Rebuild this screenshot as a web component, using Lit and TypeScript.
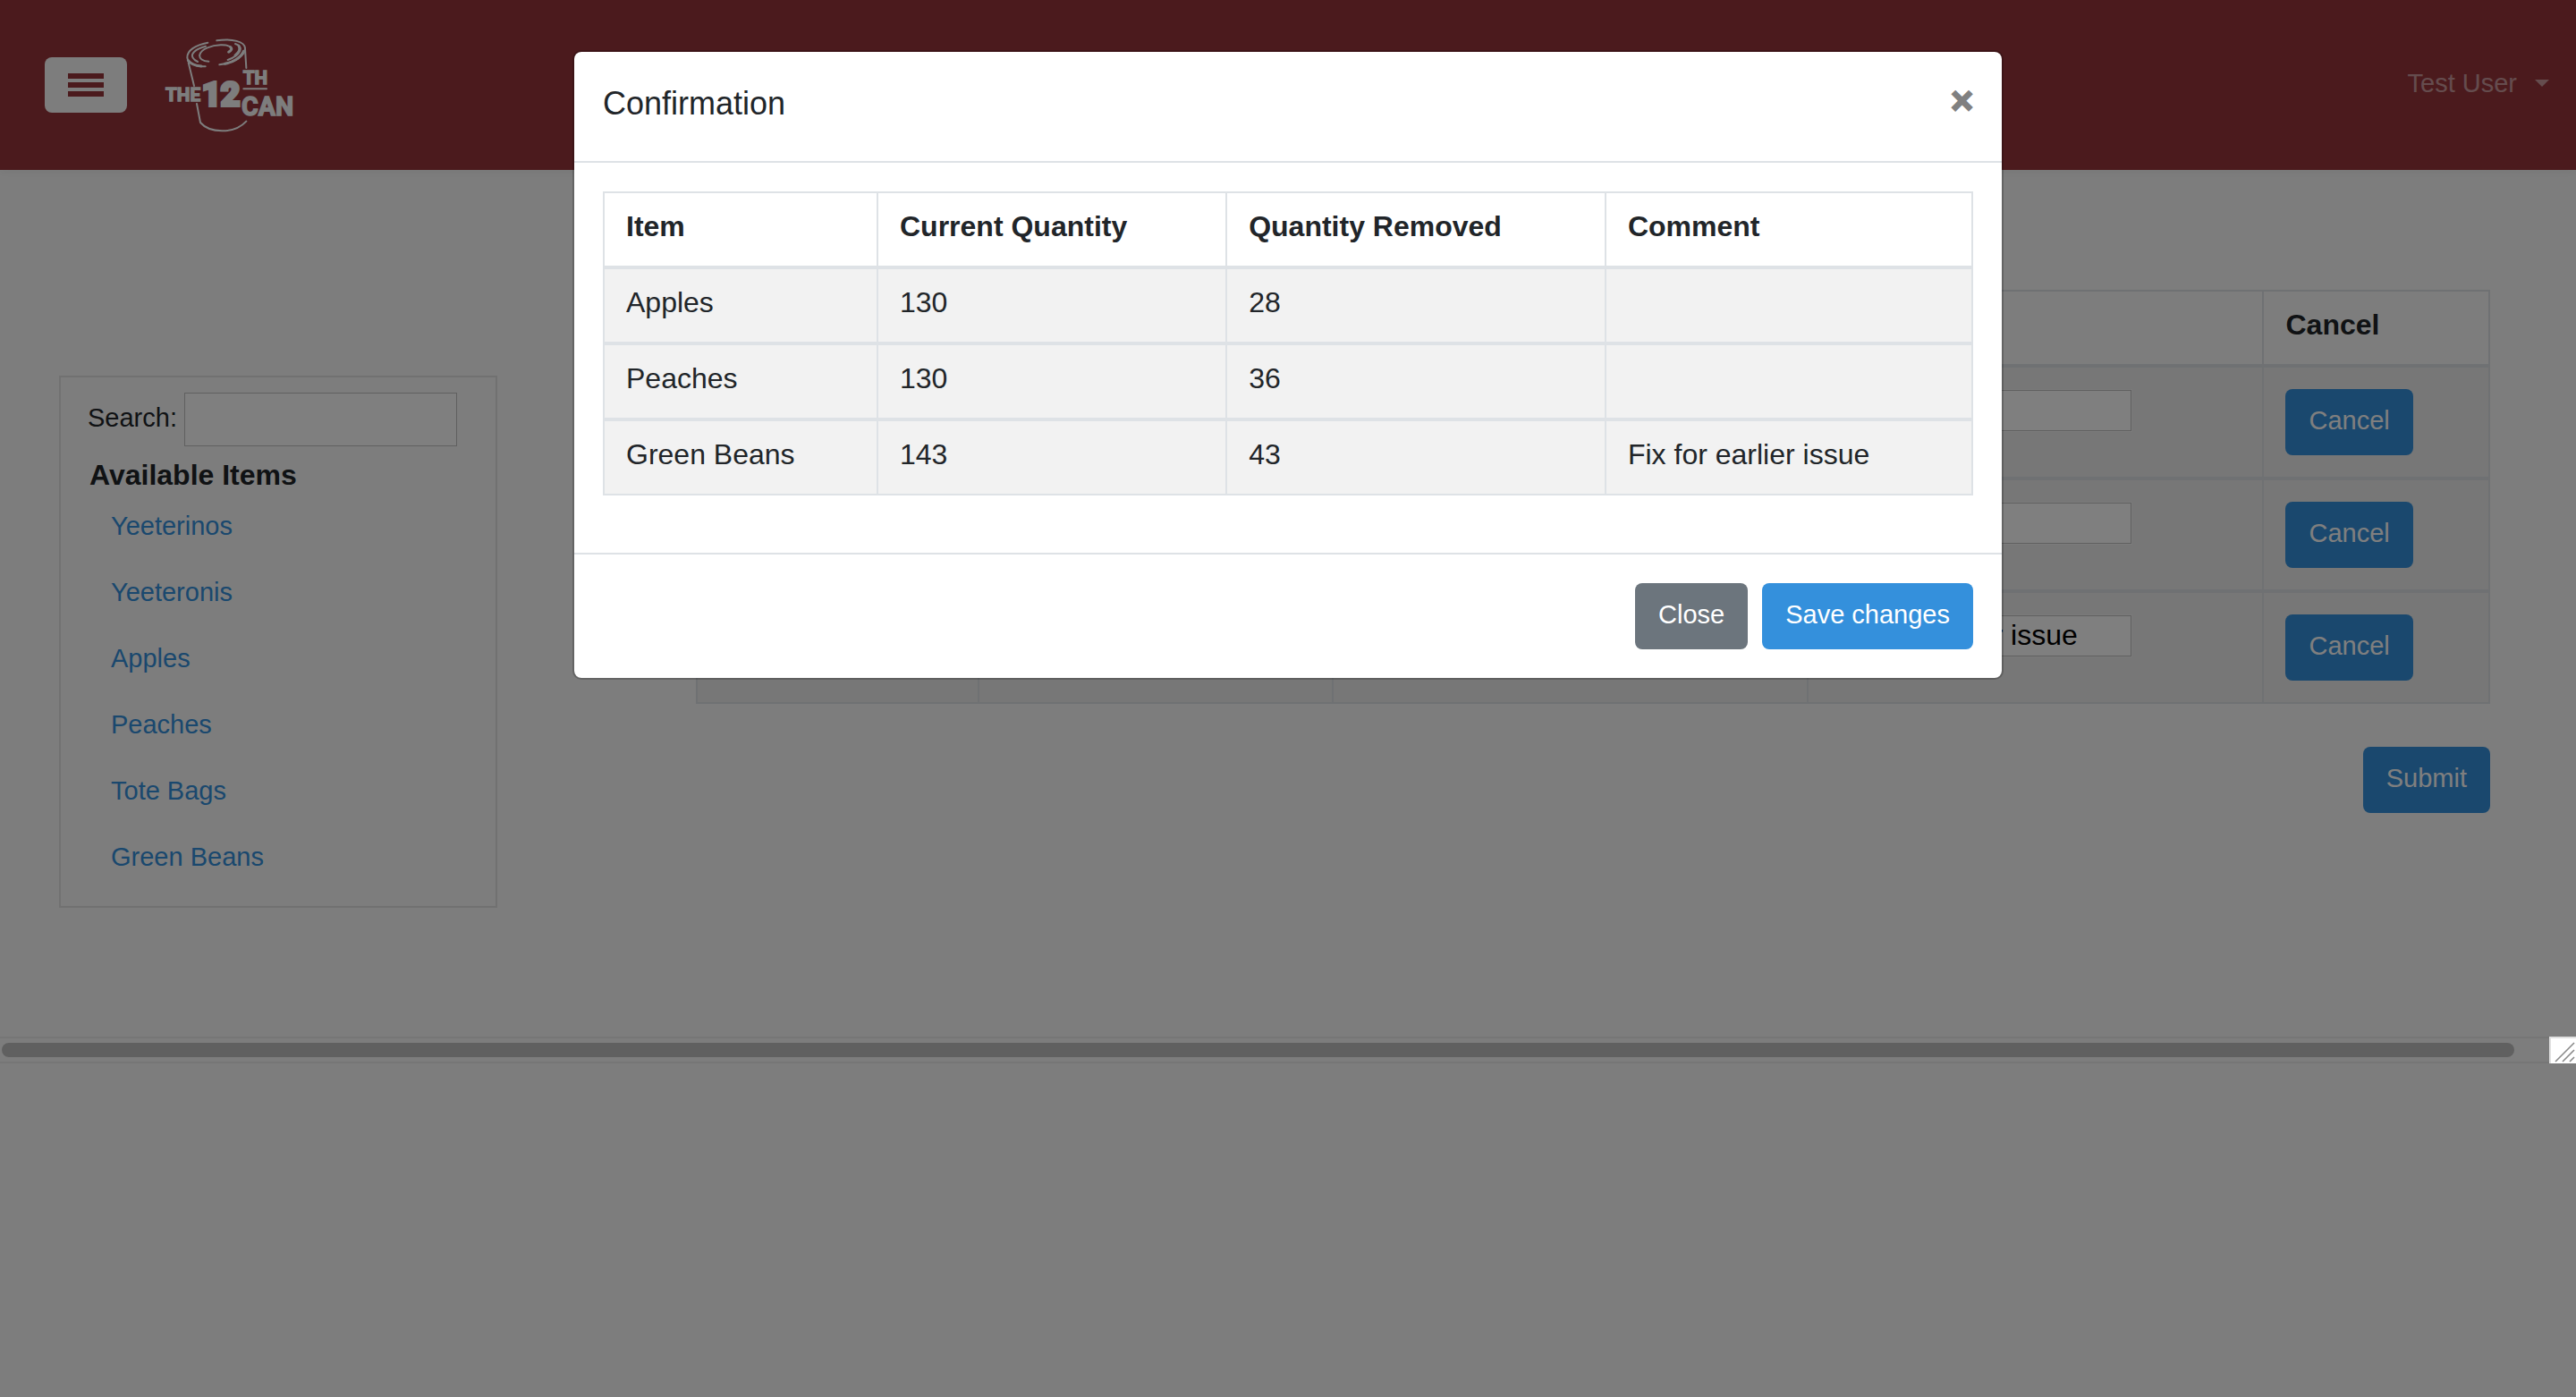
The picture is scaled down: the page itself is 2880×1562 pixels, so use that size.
import { LitElement, html, css } from "lit";
import { customElement, property } from "lit/decorators.js";

interface Removal {
  item: string;
  current: number;
  removed: number;
  comment: string;
}

const REMOVALS: Removal[] = [
  { item: "Apples", current: 130, removed: 28, comment: "" },
  { item: "Peaches", current: 130, removed: 36, comment: "" },
  { item: "Green Beans", current: 143, removed: 43, comment: "Fix for earlier issue" },
];

const AVAILABLE = ["Yeeterinos", "Yeeteronis", "Apples", "Peaches", "Tote Bags", "Green Beans"];

const shared = css`
  * {
    box-sizing: border-box;
  }
  button,
  input {
    font-family: inherit;
    margin: 0;
  }
  .btn {
    display: block;
    border: 0;
    border-radius: 8px;
    padding: 12px 26px 16px;
    font-size: 29px;
    line-height: 46px;
    color: #fff;
    background: #3490dc;
    cursor: pointer;
  }
  .btn.secondary {
    background: #6c757d;
  }
  .grid {
    width: 100%;
    table-layout: fixed;
    border-collapse: collapse;
    border: 2px solid #dee2e6;
    font-size: 32px;
    line-height: 51px;
    text-align: left;
  }
  .grid th,
  .grid td {
    border: 2px solid #dee2e6;
    padding: 12px 24px 18px;
    vertical-align: top;
  }
  .grid tbody td {
    border-top-width: 4px;
    background: rgba(0, 0, 0, 0.05);
  }
`;

@customElement("can-logo")
export class CanLogo extends LitElement {
  static styles = css`
    :host {
      display: block;
    }
    .logo {
      display: block;
      width: 146px;
      height: 106px;
      overflow: visible;
    }
    .line {
      fill: none;
      stroke: #fbfbfb;
      stroke-width: 6;
      stroke-linecap: round;
      stroke-linejoin: round;
    }
    .thick {
      stroke-width: 9;
    }
    .word {
      fill: #fbfbfb;
      stroke: #fbfbfb;
      stroke-width: 4;
      font-family: Roboto, "Liberation Sans", sans-serif;
      font-weight: 700;
    }
    .word.small {
      font-size: 62px;
    }
    .word.medium {
      font-size: 86px;
    }
    .word.large {
      font-size: 110px;
      stroke-width: 12;
    }
  `;

  render() {
    return html`
      <svg class="logo" viewBox="462 66 438 318" role="img" aria-label="The 12th Can">
        <path class="line" d="M607 83 C565 91 537 110 538 133 C540 151 565 163 599 163" />
        <path class="line thick" d="M541 143 C550 155 570 161 585 162" />
        <path class="line" d="M637 76 C690 68 730 80 732 101 C733 126 700 150 646 157" />
        <path class="line thick" d="M727 112 C718 134 690 149 665 154" />
        <path class="line" d="M600 95 C565 104 548 121 557 134 C560 140 566 144 573 147" />
        <path class="line" d="M610 146 C590 146 577 136 580 124 C584 103 622 92 650 91 C682 90 696 102 676 115" />
        <path class="line thick" d="M683 98 C689 103 687 108 678 114" />
        <path class="line" d="M699 87 C731 96 716 126 674 141" />
        <path class="line thick" d="M711 94 C717 104 711 117 699 126" />
        <path class="line" d="M732 104 L736 168" />
        <path class="line" d="M542 150 L561 228" />
        <path class="line" d="M570 288 L582 351 C612 386 694 392 736 347" />
        <text class="word small" x="465" y="279">THE</text>
        <text class="word large" x="588" y="294">12</text>
        <text class="word small" x="725" y="222">TH</text>
        <path class="line" d="M727 238 H804" />
        <text class="word medium" x="720" y="326">CAN</text>
      </svg>
    `;
  }
}

@customElement("site-header")
export class SiteHeader extends LitElement {
  static styles = [
    shared,
    css`
      :host {
        display: block;
      }
      .bar {
        display: flex;
        align-items: flex-start;
        height: 190px;
        padding: 0 30px 0 50px;
        background: #96343a;
        box-shadow: 0 4px 8px rgba(0, 0, 0, 0.04);
      }
      .toggle {
        display: flex;
        flex-direction: column;
        align-items: center;
        justify-content: center;
        gap: 4px;
        width: 92px;
        height: 62px;
        margin: 64px 42px 0 0;
        padding: 0;
        border: 0;
        border-radius: 8px;
        background: #fbfbfb;
      }
      .toggle span {
        width: 40px;
        height: 6px;
        background: #96343a;
      }
      .brand {
        margin-top: 42px;
      }
      .user {
        display: flex;
        align-items: center;
        gap: 20px;
        margin: 70px 0 0 auto;
        font-size: 29px;
        line-height: 46px;
        color: rgba(255, 255, 255, 0.5);
        text-decoration: none;
      }
      .caret {
        border: 8px solid transparent;
        border-top-color: currentColor;
        border-bottom: 0;
      }
    `,
  ];

  render() {
    return html`
      <header class="bar">
        <button class="toggle" aria-label="Toggle menu"><span></span><span></span><span></span></button>
        <a class="brand" href="#"><can-logo></can-logo></a>
        <a class="user" href="#">Test User<span class="caret"></span></a>
      </header>
    `;
  }
}

@customElement("item-picker")
export class ItemPicker extends LitElement {
  @property({ attribute: false }) items: string[] = [];

  static styles = [
    shared,
    css`
      :host {
        display: block;
      }
      .panel {
        border: 2px solid #e2e2e2;
        padding: 17px 30px 16px;
      }
      .search {
        display: flex;
        align-items: center;
        gap: 8px;
        font-size: 29px;
      }
      .search label {
        padding-bottom: 4px;
      }
      .search input {
        flex: 1;
        min-width: 0;
        max-width: 305px;
        height: 60px;
        padding: 0 6px;
        border: 1px solid #c0c0c0;
        background: #fff;
        font-size: 29px;
      }
      h2 {
        margin: 10px 0 0;
        padding-left: 2px;
        font-size: 32px;
        line-height: 44px;
      }
      ul {
        margin: 0;
        padding: 0;
        list-style: none;
      }
      a {
        display: block;
        padding: 12px 26px 16px;
        font-size: 29px;
        line-height: 46px;
        color: #3490dc;
        text-decoration: none;
      }
    `,
  ];

  render() {
    return html`
      <aside class="panel">
        <div class="search">
          <label for="search">Search:</label>
          <input id="search" type="text" />
        </div>
        <h2>Available Items</h2>
        <ul>
          ${this.items.map((name) => html`<li><a href="#">${name}</a></li>`)}
        </ul>
      </aside>
    `;
  }
}

@customElement("removal-form")
export class RemovalForm extends LitElement {
  @property({ attribute: false }) rows: Removal[] = [];

  static styles = [
    shared,
    css`
      :host {
        display: block;
      }
      form {
        display: flex;
        flex-direction: column;
        align-items: flex-end;
        gap: 48px;
      }
      .item {
        width: 15.7%;
      }
      .current {
        width: 19.8%;
      }
      .removed {
        width: 26.5%;
      }
      .comment {
        width: 25.4%;
      }
      .grid tbody td {
        padding: 24px;
      }
      .field {
        display: block;
        width: 336px;
        max-width: 100%;
        height: 46px;
        margin: 1px;
        padding: 0 4px 2px;
        border: 1px solid #c0c0c0;
        box-shadow: 0 0 0 1px #f6f6f6;
        background: #fff;
        color: #000;
        font-size: 32px;
      }
    `,
  ];

  render() {
    return html`
      <form>
        <table class="grid">
          <colgroup>
            <col class="item" />
            <col class="current" />
            <col class="removed" />
            <col class="comment" />
            <col />
          </colgroup>
          <thead>
            <tr>
              <th>Item</th>
              <th>Current Quantity</th>
              <th>Quantity Removed</th>
              <th>Comment</th>
              <th>Cancel</th>
            </tr>
          </thead>
          <tbody>
            ${this.rows.map(
              (r) => html`<tr>
                <td>${r.item}</td>
                <td>${r.current}</td>
                <td><input class="field" type="text" aria-label="Quantity of ${r.item}" .value=${String(r.removed)} /></td>
                <td><input class="field" type="text" aria-label="Comment on ${r.item}" .value=${r.comment} /></td>
                <td><button class="btn" type="button">Cancel</button></td>
              </tr>`
            )}
          </tbody>
        </table>
        <button class="btn" type="button">Submit</button>
      </form>
    `;
  }
}

@customElement("confirm-dialog")
export class ConfirmDialog extends LitElement {
  @property({ attribute: false }) rows: Removal[] = [];

  static styles = [
    shared,
    css`
      :host {
        display: block;
      }
      .dialog {
        max-width: 1600px;
        margin: 56px auto;
        border: 2px solid rgba(0, 0, 0, 0.2);
        border-radius: 10px;
        background: #fff;
        background-clip: padding-box;
      }
      .head {
        display: flex;
        align-items: flex-start;
        justify-content: space-between;
        padding: 29px 32px 35px;
        border-bottom: 2px solid #dee2e6;
      }
      h1 {
        margin: 0;
        font-size: 36px;
        font-weight: 400;
        line-height: 58px;
      }
      .close {
        padding: 0;
        border: 0;
        background: none;
        color: #808080;
        font-size: 43px;
        font-weight: 700;
        line-height: 50px;
        -webkit-text-stroke: 2px #808080;
      }
      .body {
        padding: 32px 32px 64px;
      }
      .item {
        width: 20%;
      }
      .current {
        width: 25.5%;
      }
      .removed {
        width: 27.7%;
      }
      .foot {
        display: flex;
        justify-content: flex-end;
        gap: 16px;
        padding: 32px;
        border-top: 2px solid #dee2e6;
      }
    `,
  ];

  render() {
    return html`
      <section class="dialog" role="dialog" aria-modal="true" aria-labelledby="title">
        <div class="head">
          <h1 id="title">Confirmation</h1>
          <button class="close" aria-label="Close">×</button>
        </div>
        <div class="body">
          <table class="grid">
            <colgroup>
              <col class="item" />
              <col class="current" />
              <col class="removed" />
              <col />
            </colgroup>
            <thead>
              <tr>
                <th>Item</th>
                <th>Current Quantity</th>
                <th>Quantity Removed</th>
                <th>Comment</th>
              </tr>
            </thead>
            <tbody>
              ${this.rows.map(
                (r) => html`<tr>
                  <td>${r.item}</td>
                  <td>${r.current}</td>
                  <td>${r.removed}</td>
                  <td>${r.comment}</td>
                </tr>`
              )}
            </tbody>
          </table>
        </div>
        <div class="foot">
          <button class="btn secondary">Close</button>
          <button class="btn">Save changes</button>
        </div>
      </section>
    `;
  }
}

@customElement("app-root")
export class AppRoot extends LitElement {
  static styles = [
    shared,
    css`
      :host {
        display: block;
        position: relative;
        min-height: 100vh;
        background: #fbfbfb;
        color: #212529;
        font-family: "Liberation Sans", Arial, sans-serif;
      }
      .main {
        display: grid;
        grid-template-columns: 490px minmax(0, 1fr);
        column-gap: 222px;
        align-items: start;
        padding: 134px 96px 144px 66px;
      }
      item-picker {
        margin-top: 96px;
      }
      .scroll {
        display: flex;
        align-items: center;
        height: 30px;
        border: 2px solid #ececec;
        border-width: 2px 0;
        background: #fafafa;
      }
      .thumb {
        flex: 1;
        height: 16px;
        margin: 0 39px 0 2px;
        border-radius: 8px;
        background: #c1c1c1;
      }
      .corner {
        position: relative;
        z-index: 2;
        display: block;
        width: 30px;
        height: 30px;
      }
      .overlay {
        position: absolute;
        inset: 0;
        z-index: 1;
        background: rgba(0, 0, 0, 0.5);
      }
    `,
  ];

  render() {
    return html`
      <site-header></site-header>
      <main class="main">
        <item-picker .items=${AVAILABLE}></item-picker>
        <removal-form .rows=${REMOVALS}></removal-form>
      </main>
      <div class="scroll">
        <div class="thumb"></div>
        <svg class="corner" viewBox="0 0 30 30" aria-hidden="true">
          <rect width="30" height="30" fill="#e0e0e0" />
          <rect x="2" y="2" width="28" height="28" fill="#fff" />
          <path d="M7 28 L28 7 M15 28 L28 15 M23 28 L28 23" stroke="#8a8a8a" stroke-width="1.6" />
        </svg>
      </div>
      <div class="overlay">
        <confirm-dialog .rows=${REMOVALS}></confirm-dialog>
      </div>
    `;
  }
}
